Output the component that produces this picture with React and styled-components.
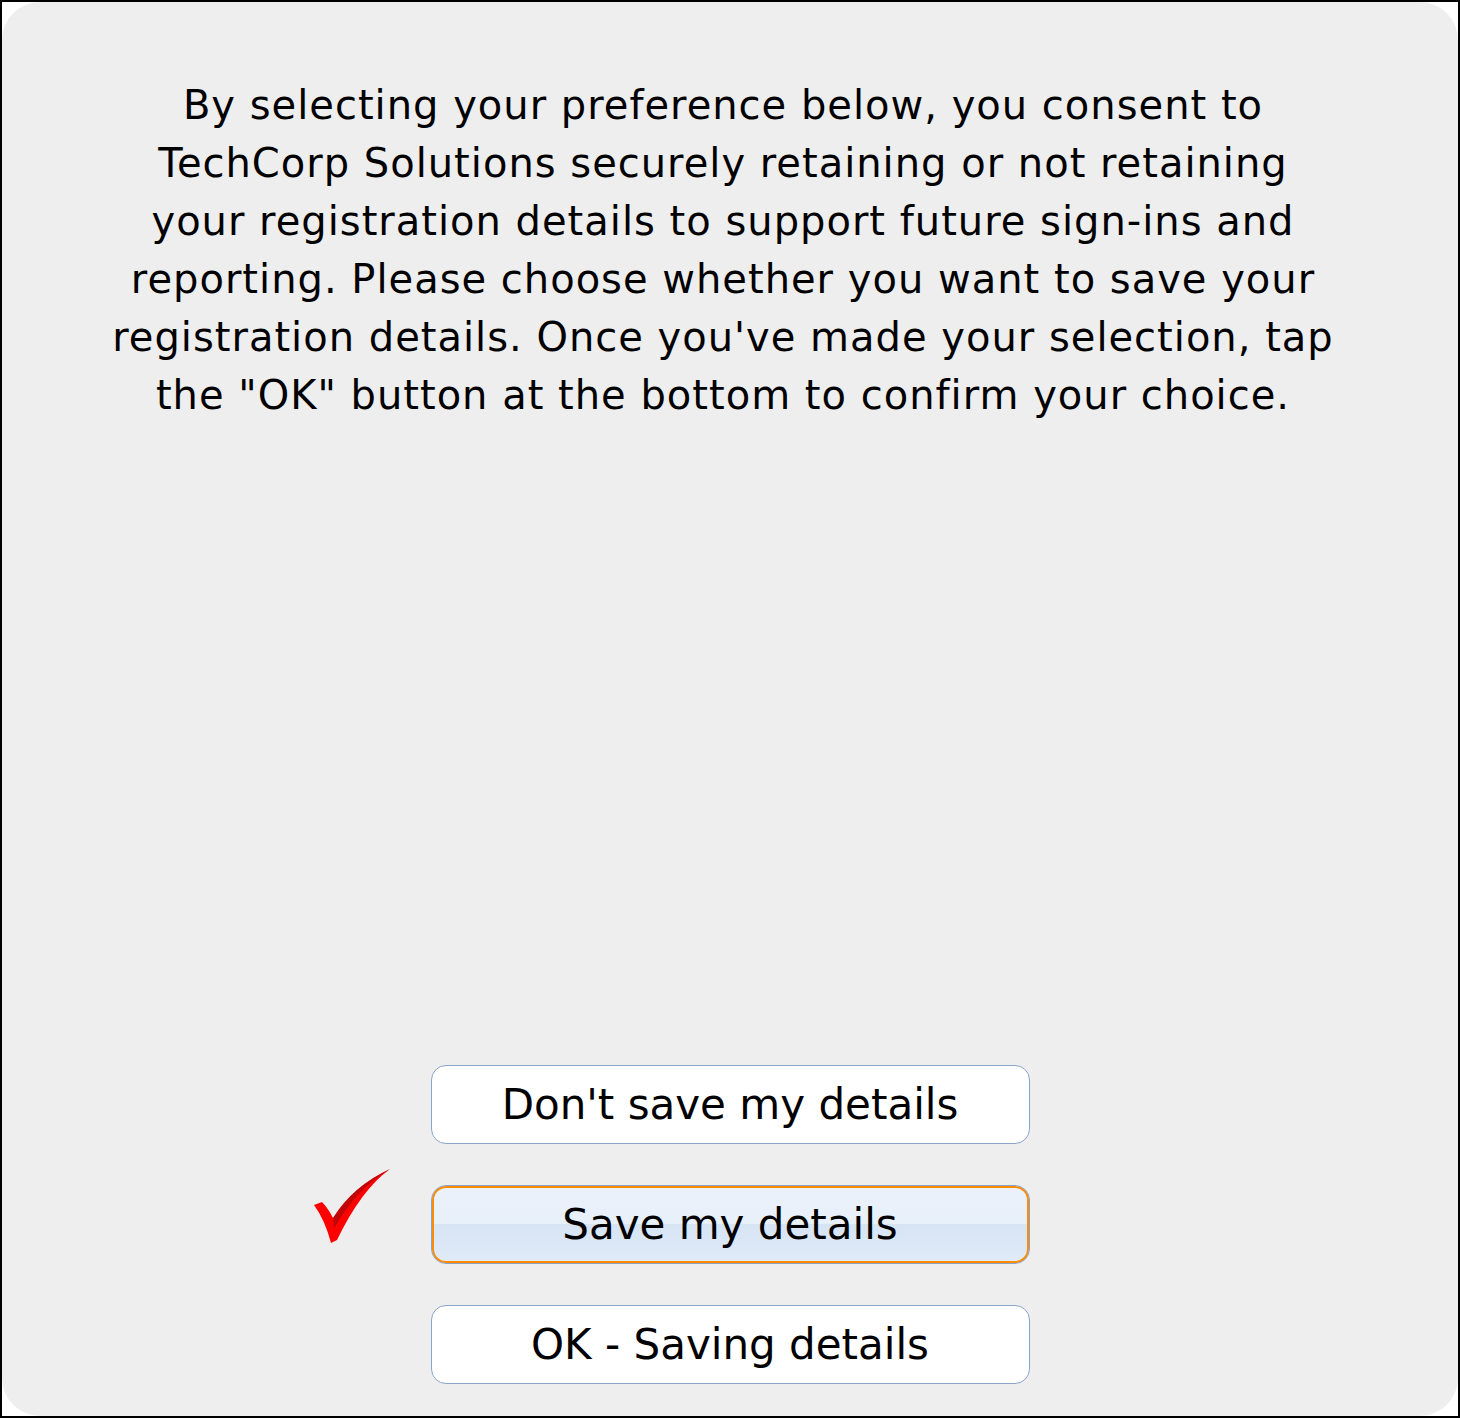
import React from "react";
import styled, { createGlobalStyle, css } from "styled-components";

const Global = createGlobalStyle`
  html, body { margin: 0; padding: 0; background: #ffffff; }
  body { font-family: "DejaVu Sans", Verdana, sans-serif; }
  * { box-sizing: border-box; }
`;

const Frame = styled.div`
  width: 1460px;
  height: 1418px;
  border: 2px solid #000000;
  background: #ffffff;
  display: flex;
`;

const Panel = styled.div`
  flex: 1;
  background: #eeeeee;
  border-radius: 38px;
  display: flex;
  flex-direction: column;
  align-items: center;
  padding: 74px 0 32px;
`;

const Message = styled.p`
  margin: 0;
  padding-right: 14px;
  font-family: "DejaVu Sans", Verdana, sans-serif;
  font-size: 40px;
  line-height: 58px;
  letter-spacing: 1px;
  color: #000000;
  text-align: center;
  white-space: nowrap;
`;

const Choices = styled.div`
  margin-top: auto;
  display: flex;
  flex-direction: column;
  gap: 41px;
`;

const ChoiceButton = styled.button`
  position: relative;
  width: 599px;
  height: 79px;
  border-radius: 15px;
  border: 1px solid #8aa4c8;
  background: #ffffff;
  font-family: "DejaVu Sans", Verdana, sans-serif;
  font-size: 42px;
  color: #000000;
  padding: 0;
  cursor: pointer;
  ${(p) =>
    p.$selected &&
    css`
      background: linear-gradient(
        to bottom,
        #eaf1fb 0%,
        #e8f0fa 49%,
        #d6e4f4 50%,
        #e1ebf8 100%
      );
      box-shadow: inset 0 0 0 2px #ff8c00;
    `}
`;

const Check = styled.svg`
  position: absolute;
  left: -119px;
  top: -18px;
  width: 78px;
  height: 76px;
  overflow: visible;
`;

export default function App() {
  return (
    <>
      <Global />
      <Frame>
        <Panel>
          <Message>
            By selecting your preference below, you consent to
            <br />
            TechCorp Solutions securely retaining or not retaining
            <br />
            your registration details to support future sign-ins and
            <br />
            reporting. Please choose whether you want to save your
            <br />
            registration details. Once you've made your selection, tap
            <br />
            the "OK" button at the bottom to confirm your choice.
          </Message>
          <Choices>
            <ChoiceButton>Don't save my details</ChoiceButton>
            <ChoiceButton $selected>
              <Check viewBox="0 0 78 76" aria-hidden="true">
                <path
                  d="M1 37 L9 34 Q15 40 20 50 Q40 18 77 1 Q48 22 24 72 L18 75 Q12 52 1 37 Z"
                  fill="#ff0000"
                />
                <path
                  d="M20 50 Q40 18 77 1 Q44 20 21 60 Z"
                  fill="#8a0a0a"
                  opacity="0.55"
                />
              </Check>
              Save my details
            </ChoiceButton>
            <ChoiceButton>OK - Saving details</ChoiceButton>
          </Choices>
        </Panel>
      </Frame>
    </>
  );
}
